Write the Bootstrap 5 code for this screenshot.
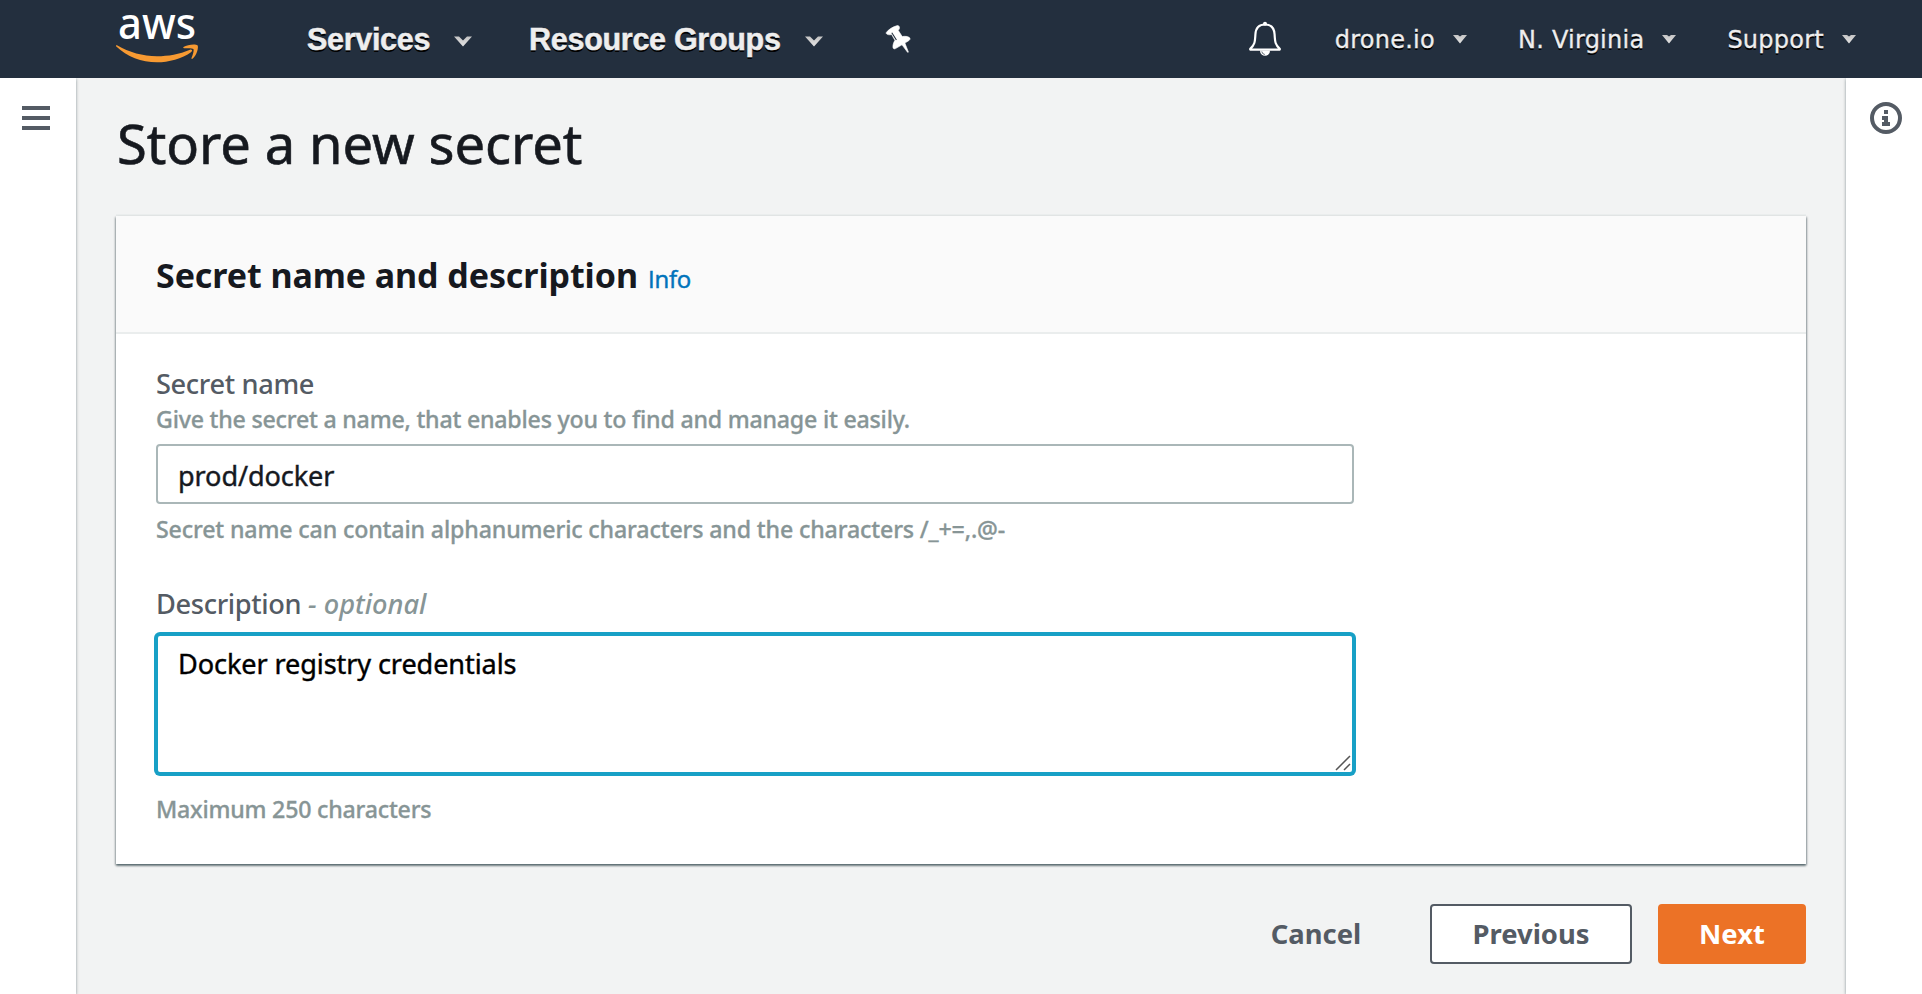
<!DOCTYPE html>
<html lang="en">
<head>
<meta charset="utf-8">
<meta name="viewport" content="width=device-width, initial-scale=1">
<title>Store a new secret</title>
<link href="https://cdn.jsdelivr.net/npm/bootstrap@5.3.0/dist/css/bootstrap.min.css" rel="stylesheet">
<style>
  body { font-family: "Noto Sans", "Open Sans", sans-serif; background: #f2f3f3; color: #16191f; height: 994px; overflow: hidden; }
  svg { display: block; flex: none; overflow: visible; }
  .topbar { height: 78px; background: #232f3e; color: #eee; white-space: nowrap; padding-left: 116px; }
  .topbar a { color: inherit; text-decoration: none; text-shadow: 0 2px 0 #000; }
  .menu-main { font: 700 30.5px/44px "Liberation Sans", sans-serif; letter-spacing: -.3px; -webkit-text-stroke: .5px #eee; }
  .menu-side { font: 400 24px/44px "DejaVu Sans", sans-serif; padding-top: 1px; letter-spacing: .25px; -webkit-text-stroke: .3px #eee; }
  .rail { background: #fff; flex: none; box-shadow: 0 1px 3px rgba(0,28,36,.45); z-index: 1; padding-top: 24px; }
  .rail-start { width: 76px; padding-left: 22px; }
  .rail-end { width: 76px; padding-left: 24px; }
  .workspace { padding: 35px 40px 0; background: #f2f3f3; }
  h1 { font-size: 54.3px; line-height: 60px; font-weight: 400; letter-spacing: -.1px; -webkit-text-stroke: .6px #16191f; margin: 0 0 43px 1px; }
  .panel { border: 0; border-radius: 0; box-shadow: 0 2px 2px rgba(0,28,36,.4), 1px 1px 2px rgba(0,28,36,.3), -1px 1px 2px rgba(0,28,36,.25), 0 -2px 0 #eaeded; height: 648px; }
  .panel .card-header { height: 118px; background: #fafafa; border-bottom: 2px solid #eaeded; border-radius: 0; padding: 37px 40px 0; }
  h2 { font-size: 34px; line-height: 44px; font-weight: 700; letter-spacing: -.08px; margin: 0; }
  .info-link { font: 400 24px/44px "Open Sans", sans-serif; color: #0073bb; text-decoration: none; margin-left: 10px; letter-spacing: -.2px; -webkit-text-stroke: .5px #0073bb; }
  .panel .card-body { padding: 32px 40px 0; }
  .panel .form-label { display: block; font-size: 27.2px; line-height: 36px; font-weight: 500; letter-spacing: -.35px; color: #545b64; margin: 0; }
  .form-label i { color: #879596; letter-spacing: 0; }
  .panel .form-text { font-size: 23.2px; line-height: 32px; color: #879596; margin: 0; font-weight: 500; letter-spacing: -.22px; -webkit-text-stroke: .3px #879596; white-space: nowrap; }
  .panel .form-text.rule-hint { letter-spacing: -.15px; }
  .fieldwrap { width: 1198px; }
  .panel .form-control { font-size: 27.1px; font-weight: 400; letter-spacing: -.1px; -webkit-text-stroke: .4px; color: #16191f; border: 2px solid #aab7b8; border-radius: 4px; padding: 2px 20px 0; }
  .panel input.form-control { height: 60px; }
  .panel textarea.form-control { height: 140px; line-height: 36px; padding: 10px 20px; resize: none; color: #000; border-color: #18a0c6; box-shadow: 0 0 0 2px #18a0c6; display: block; }
  .grip { position: absolute; right: 3px; bottom: 3px; }
  .btn { --bs-btn-font-weight: 700; height: 60px; font-size: 27.4px; line-height: 56px; padding: 0; border-width: 2px; border-radius: 4px; color: #545b64; }
  .btn-prev { width: 202px; background: #fff; border-color: #545b64; }
  .btn-next { width: 148px; background: #ec7226; border-color: #ec7226; color: #fff; margin-left: 26px; }
  .btn-cancel { width: 158px; }
</style>
</head>
<body class="d-flex flex-column">
<svg width="0" height="0" class="position-absolute">
  <defs>
    <linearGradient id="fade" x1="0" y1="0" x2="0" y2="1"><stop offset="0" stop-color="#c4c4c4"/><stop offset="1" stop-color="#e4e4e4"/></linearGradient>
  </defs>
</svg>
<nav class="topbar d-flex align-items-center">
  <svg width="84" height="78" viewBox="116 0 84 78">
    <text x="118" y="38.500" font-family="Noto Sans" font-size="44" font-weight="500" fill="#fff" textLength="78" lengthAdjust="spacingAndGlyphs">aws</text>
    <path d="M117 45.300c12 7.200 26 10.900 40 10.900 11 0 22.500-2 33-6.500 1.600-.6 3 1 1.300 2.200-9.300 6.800-22.800 10.300-34.300 10.300-15.600 0-30-5.800-40.700-15.800-.8-.8-.1-1.600.7-1.100z" fill="#f79a32"/>
    <path d="M183.500 47.100c3.800-2.700 12.300-3.400 14-1.800 1.400 1.600-.5 9.700-4.700 13.300-.9.700-1.700.2-1.300-.6 1.400-3 2.700-7.600 1.900-8.900-.8-1.100-5.700-1.100-9.200-.8-.9.100-1.300-.7-.7-1.200z" fill="#f79a32"/>
  </svg>
  <a href="#" class="menu-main d-flex align-items-center" style="margin-left:107px">Services
    <svg width="18" height="11" viewBox="0 0 18 11" style="margin-left:24px;margin-top:4px"><path d="M0 0.500h5l4 4 4-4h5L9 10.500z" fill="url(#fade)"/></svg></a>
  <a href="#" class="menu-main d-flex align-items-center" style="margin-left:57px">Resource Groups
    <svg width="18" height="11" viewBox="0 0 18 11" style="margin-left:24px;margin-top:4px"><path d="M0 0.500h5l4 4 4-4h5L9 10.500z" fill="url(#fade)"/></svg></a>
  <svg width="26" height="30" viewBox="884 23 26 30" style="margin-left:62px">
    <path d="M885.300 31.500c2-3 7-6 11.200-7 .9-.2 2 .9 2 2.200 0 1.100-.6 2-1.300 2.600l4 6.200c3-.5 6.600-.1 7.700 1.600.5 1-.2 2-1.200 2.600l-3.800 2.400 3.400 8.700c.2.700-.5.900-.9.300l-5.400-7.300-6.500 3.800c-1.100.6-2.300.2-2.500-.9-.4-2.300.5-5 1.900-7.400l-3.300-5.800c-1.700.5-3.800.400-4.900-.5-.5-.4-.7-1-.4-1.500z" fill="#fff" stroke="#fff" stroke-width=".6"/>
    <path d="M890.800 31.800l4.600 7.200" stroke="#232f3e" stroke-width="1.100"/>
  </svg>
  <div class="d-flex align-items-center ms-auto" style="margin-right:66px">
    <svg width="34" height="36" viewBox="1247 21 34 36" fill="none">
      <path d="M1264 24.500c-6 0-9.300 4-9.600 10-.4 7.500-.7 10.500-5.200 14.300v.8h29.600v-.8c-4.500-3.800-4.800-6.800-5.200-14.300-.3-6-3.600-10-9.600-10z" stroke="#fff" stroke-width="2.200" stroke-linejoin="round"/>
      <circle cx="1264" cy="23.700" r="2" fill="#fff"/>
      <path d="M1259 50.500a5 5.300 0 0 0 10 0z" fill="#fff"/><path d="M1260.800 51.500a3.500 3.500 0 0 0 3 3" stroke="#232f3e" stroke-width=".7"/>
    </svg>
    <a href="#" class="menu-side d-flex align-items-center" style="margin-left:53px">drone.io
      <svg width="14" height="9" viewBox="0 0 14 9" style="margin-left:18px"><path d="M0 0h5l2 1.500L9 0h5L7 8.500z" fill="url(#fade)"/></svg></a>
    <a href="#" class="menu-side d-flex align-items-center" style="margin-left:51px">N. Virginia
      <svg width="14" height="9" viewBox="0 0 14 9" style="margin-left:18px"><path d="M0 0h5l2 1.500L9 0h5L7 8.500z" fill="url(#fade)"/></svg></a>
    <a href="#" class="menu-side d-flex align-items-center" style="margin-left:51px">Support
      <svg width="14" height="9" viewBox="0 0 14 9" style="margin-left:18px"><path d="M0 0h5l2 1.500L9 0h5L7 8.500z" fill="url(#fade)"/></svg></a>
  </div>
</nav>
<div class="d-flex flex-grow-1 overflow-hidden">
  <aside class="rail rail-start">
    <svg width="28" height="32" viewBox="0 0 28 32" fill="#545b64"><path d="M0 4h28v4H0zM0 14h28v4H0zM0 24h28v4H0z"/></svg>
  </aside>
  <main class="workspace flex-grow-1">
    <h1>Store a new secret</h1>
    <section class="card panel">
      <div class="card-header d-flex align-items-baseline">
        <h2>Secret name and description</h2><a href="#" class="info-link">Info</a>
      </div>
      <div class="card-body">
        <div class="fieldwrap">
          <label class="form-label" for="sname">Secret name</label>
          <div class="form-text" style="margin-top:1px">Give the secret a name, that enables you to find and manage it easily.</div>
          <input id="sname" class="form-control" style="margin-top:9px" value="prod/docker">
          <div class="form-text rule-hint" style="margin-top:9px">Secret name can contain alphanumeric characters and the characters /_+=,.@-</div>
        </div>
        <div class="fieldwrap" style="margin-top:41px">
          <label class="form-label" for="sdesc">Description <i>- optional</i></label>
          <div class="position-relative" style="margin-top:12px">
            <textarea id="sdesc" class="form-control">Docker registry credentials</textarea>
            <svg class="grip" width="16" height="16" viewBox="0 0 16 16" stroke="#555" stroke-width="1.500"><path d="M1 15L15 1M9 15l6-6"/></svg>
          </div>
          <div class="form-text" style="margin-top:19px">Maximum 250 characters</div>
        </div>
      </div>
    </section>
    <div class="d-flex justify-content-end" style="margin-top:40px">
      <button class="btn btn-cancel" style="margin-right:35px">Cancel</button>
      <button class="btn btn-prev">Previous</button>
      <button class="btn btn-next">Next</button>
    </div>
  </main>
  <aside class="rail rail-end">
    <svg width="32" height="32" viewBox="0 0 32 32" fill="#545b64"><circle cx="16" cy="16" r="14" fill="none" stroke="#545b64" stroke-width="4"/><path d="M14 8h4v4h-4zM12 14h6v6h2v4h-8v-4h2v-2h-2z"/></svg>
  </aside>
</div>
<script src="https://cdn.jsdelivr.net/npm/bootstrap@5.3.0/dist/js/bootstrap.bundle.min.js"></script>
</body>
</html>
